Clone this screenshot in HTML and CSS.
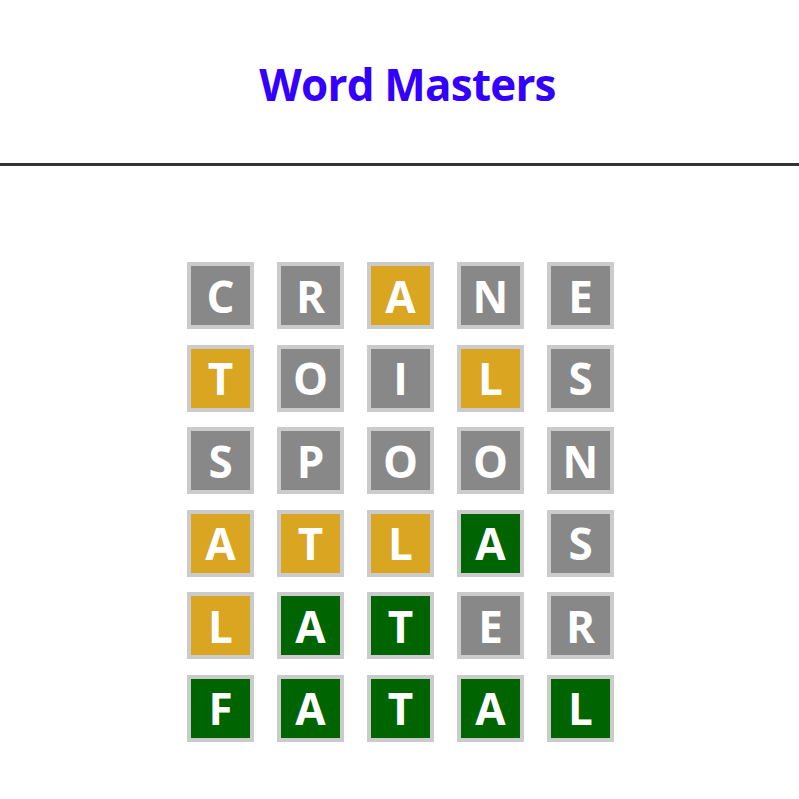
FILE: index.html
```html
<!DOCTYPE html>
<html lang="en">
<head>
<meta charset="utf-8">
<title>Word Masters</title>
<link rel="stylesheet" href="styles.css">
</head>
<body>
<header class="navbar">
  <h1 class="brand">Word Masters</h1>
</header>
<main class="board">
  <div class="tile gray">C</div><div class="tile gray">R</div><div class="tile yellow">A</div><div class="tile gray">N</div><div class="tile gray">E</div>
  <div class="tile yellow">T</div><div class="tile gray">O</div><div class="tile gray">I</div><div class="tile yellow">L</div><div class="tile gray">S</div>
  <div class="tile gray">S</div><div class="tile gray">P</div><div class="tile gray">O</div><div class="tile gray">O</div><div class="tile gray">N</div>
  <div class="tile yellow">A</div><div class="tile yellow">T</div><div class="tile yellow">L</div><div class="tile green">A</div><div class="tile gray">S</div>
  <div class="tile yellow">L</div><div class="tile green">A</div><div class="tile green">T</div><div class="tile gray">E</div><div class="tile gray">R</div>
  <div class="tile green">F</div><div class="tile green">A</div><div class="tile green">T</div><div class="tile green">A</div><div class="tile green">L</div>
</main>
</body>
</html>
```
FILE: styles.css
```css
html, body {
  margin: 0;
  padding: 0;
  background: #fff;
}
body {
  font-family: "Open Sans", "Noto Sans", sans-serif;
}
.navbar {
  height: 163px;
  border-bottom: 3px solid #333;
  display: flex;
  align-items: center;
  justify-content: center;
}
.brand {
  margin: 0 0 0 16px;
  font-size: 44px;
  font-weight: 700;
  color: #3300ff;
  line-height: 1;
  letter-spacing: -0.8px;
  transform: translateY(2px);
}
.board {
  display: grid;
  grid-template-columns: repeat(5, 67px);
  grid-auto-rows: 67px;
  column-gap: 23px;
  row-gap: 15.6px;
  justify-content: center;
  padding-top: 96px;
  padding-left: 2px;
}
.tile {
  box-sizing: border-box;
  border: 4px solid #cbcbcb;
  display: flex;
  align-items: center;
  justify-content: center;
  color: #fff;
  font-weight: 700;
  font-size: 44px;
  line-height: 1;
}
.gray { background: #888888; }
.yellow { background: #daa520; }
.green { background: #006400; }
```
